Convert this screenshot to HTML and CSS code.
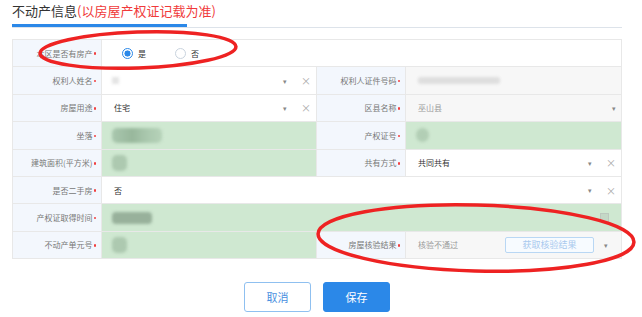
FILE: index.html
```html
<!DOCTYPE html>
<html lang="zh-CN">
<head>
    <meta charset="UTF-8">
    <title>不动产信息</title>
    <link rel="stylesheet" href="styles.css">
</head>
<body>
    <div class="page">
        <div class="title">不动产信息<span class="title-note">(以房屋产权证记载为准)</span></div>
        <div class="title-line"><div class="title-bar"></div></div>

        <div class="form-grid">
            <!-- 第1行 -->
            <div class="label">本区是否有房产<i></i></div>
            <div class="value span3">
                <label class="radio checked"><span class="dot"></span>是</label>
                <label class="radio"><span class="dot"></span>否</label>
            </div>

            <!-- 第2行 -->
            <div class="label">权利人姓名<i></i></div>
            <div class="value">
                <span class="blur blur-sq"></span>
                <span class="arrow">▾</span><span class="clear">×</span>
            </div>
            <div class="label">权利人证件号码<i></i></div>
            <div class="value disabled"><span class="blur blur-id"></span></div>

            <!-- 第3行 -->
            <div class="label">房屋用途<i></i></div>
            <div class="value">
                住宅
                <span class="arrow">▾</span><span class="clear">×</span>
            </div>
            <div class="label">区县名称<i></i></div>
            <div class="value disabled">
                巫山县
                <span class="arrow">▾</span>
            </div>

            <!-- 第4行 -->
            <div class="label">坐落<i></i></div>
            <div class="value green"><span class="blur blur-addr"></span></div>
            <div class="label">产权证号<i></i></div>
            <div class="value green"><span class="blur blur-round"></span></div>

            <!-- 第5行 -->
            <div class="label">建筑面积(平方米)<i></i></div>
            <div class="value green"><span class="blur blur-small"></span></div>
            <div class="label">共有方式<i></i></div>
            <div class="value">
                共同共有
                <span class="arrow">▾</span><span class="clear">×</span>
            </div>

            <!-- 第6行 -->
            <div class="label">是否二手房<i></i></div>
            <div class="value span3">
                否
                <span class="arrow">▾</span><span class="clear">×</span>
            </div>

            <!-- 第7行 -->
            <div class="label">产权证取得时间<i></i></div>
            <div class="value span3 green">
                <span class="blur blur-date"></span>
                <span class="cal"></span>
            </div>

            <!-- 第8行 -->
            <div class="label">不动产单元号<i></i></div>
            <div class="value green"><span class="blur blur-small"></span></div>
            <div class="label">房屋核验结果<i></i></div>
            <div class="value disabled">
                核验不通过
                <span class="check-btn">获取核验结果</span>
                <span class="arrow arrow-last">▾</span>
            </div>
        </div>

        <div class="actions">
            <button class="btn btn-cancel">取消</button>
            <button class="btn btn-save">保存</button>
        </div>
    </div>

    <!-- 截图上的红圈标注 -->
    <svg class="marks" width="642" height="317" viewBox="0 0 642 317">
        <ellipse cx="138" cy="50" rx="98" ry="18" transform="rotate(-2 138 50)" />
        <ellipse cx="476" cy="238" rx="158" ry="33" transform="rotate(1.5 476 238)" />
    </svg>
</body>
</html>
```

FILE: styles.css
```css
body {
    margin: 0;
    font-family: "Noto Sans CJK SC", "Noto Sans", sans-serif;
    background: #fff;
    color: #333;
}

.page {
    width: 610px;
    padding: 0 12px;
}

.title {
    font-size: 13px;
    line-height: 22px;
    padding-bottom: 2px;
    color: #333;
}

.title-note {
    color: #f03a3a;
}

.title-line {
    border-bottom: 1px solid #dde3ea;
}

.title-bar {
    width: 175px;
    height: 3px;
    background: #2b88e8;
}

.form-grid {
    display: grid;
    grid-template-columns: 89px 215px 89px 1fr;
    grid-auto-rows: 27.4px;
    margin-top: 11px;
    border-top: 1px solid #e8e8e8;
    border-left: 1px solid #e8e8e8;
    font-size: 8px;
}

.label,
.value {
    display: flex;
    align-items: center;
    box-sizing: border-box;
    border-right: 1px solid #e8e8e8;
    border-bottom: 1px solid #e8e8e8;
}

.label {
    justify-content: flex-end;
    padding-right: 5px;
    background: #f3f7fd;
    color: #777;
}

/* 必填红点 */
.label i {
    width: 2.5px;
    height: 2.5px;
    border-radius: 50%;
    background: #f04040;
    margin-left: 1px;
    margin-top: 1px;
}

.value {
    padding: 0 5px 0 12px;
    background: #fff;
    color: #333;
}

.span3 {
    grid-column: span 3;
}

.green {
    background: #cfe8d1;
}

.disabled {
    background: #f7f7f7;
    color: #999;
}

.radio {
    display: flex;
    align-items: center;
    margin-right: 29px;
    color: #333;
}

.radio:first-child {
    margin-left: 8px;
}

.radio .dot {
    width: 11px;
    height: 11px;
    border: 1px solid #c9d3de;
    border-radius: 50%;
    margin-right: 5px;
    box-sizing: border-box;
    background: #fff;
}

.radio.checked .dot {
    border-color: #2b88e8;
    background: radial-gradient(circle, #2b88e8 0 2.8px, #fff 3.3px);
}

.arrow {
    margin-left: auto;
    color: #888;
    font-size: 7px;
}

.clear {
    margin-left: 14px;
    color: #aaa;
    font-size: 10px;
}

.arrow-last {
    margin-left: 10px;
    margin-right: 8px;
}

.blur {
    display: inline-block;
    filter: blur(1.5px);
}

.blur-sq {
    width: 7px;
    height: 7px;
    background: #e4e4e4;
    margin-left: -2px;
}

.blur-id {
    width: 82px;
    height: 7px;
    border-radius: 3px;
    background: #dedede;
}

.blur-addr {
    width: 50px;
    height: 15px;
    border-radius: 5px;
    background: linear-gradient(90deg, #a9c7ae, #98b79c 40%, #aac8ae 70%, #b6d2b9);
    margin-left: -2px;
}

.blur-round {
    width: 13px;
    height: 14px;
    border-radius: 50%;
    background: #b2ceb5;
    margin-left: -2px;
}

.blur-small {
    width: 15px;
    height: 16px;
    border-radius: 5px;
    background: #adc9b0;
    margin-left: -2px;
}

.blur-date {
    width: 40px;
    height: 12px;
    border-radius: 4px;
    background: #98b19b;
    margin-left: -2px;
}

.cal {
    margin-left: auto;
    margin-right: 7px;
    width: 7px;
    height: 7px;
    border: 1px solid #bcc9be;
    background: #c4d8c6;
}

.check-btn {
    margin-left: auto;
    width: 89px;
    height: 16px;
    box-sizing: border-box;
    border: 1px solid #b9d7f4;
    border-radius: 2px;
    background: #f7fbff;
    color: #a9c9ee;
    font-size: 9px;
    display: flex;
    align-items: center;
    justify-content: center;
}

.actions {
    display: flex;
    justify-content: center;
    gap: 12px;
    margin-top: 23px;
}

.btn {
    width: 67px;
    height: 30px;
    border-radius: 3px;
    font-family: "Noto Sans CJK SC", sans-serif;
    font-size: 11px;
    cursor: pointer;
}

.btn-cancel {
    background: #fff;
    border: 1px solid #8fc0f0;
    color: #4a8fe0;
}

.btn-save {
    background: #2b88e8;
    border: 1px solid #2b88e8;
    color: #fff;
}

.marks {
    position: absolute;
    top: 0;
    left: 0;
    pointer-events: none;
}

.marks ellipse {
    fill: none;
    stroke: #ee2222;
    stroke-width: 3.5;
}
```
